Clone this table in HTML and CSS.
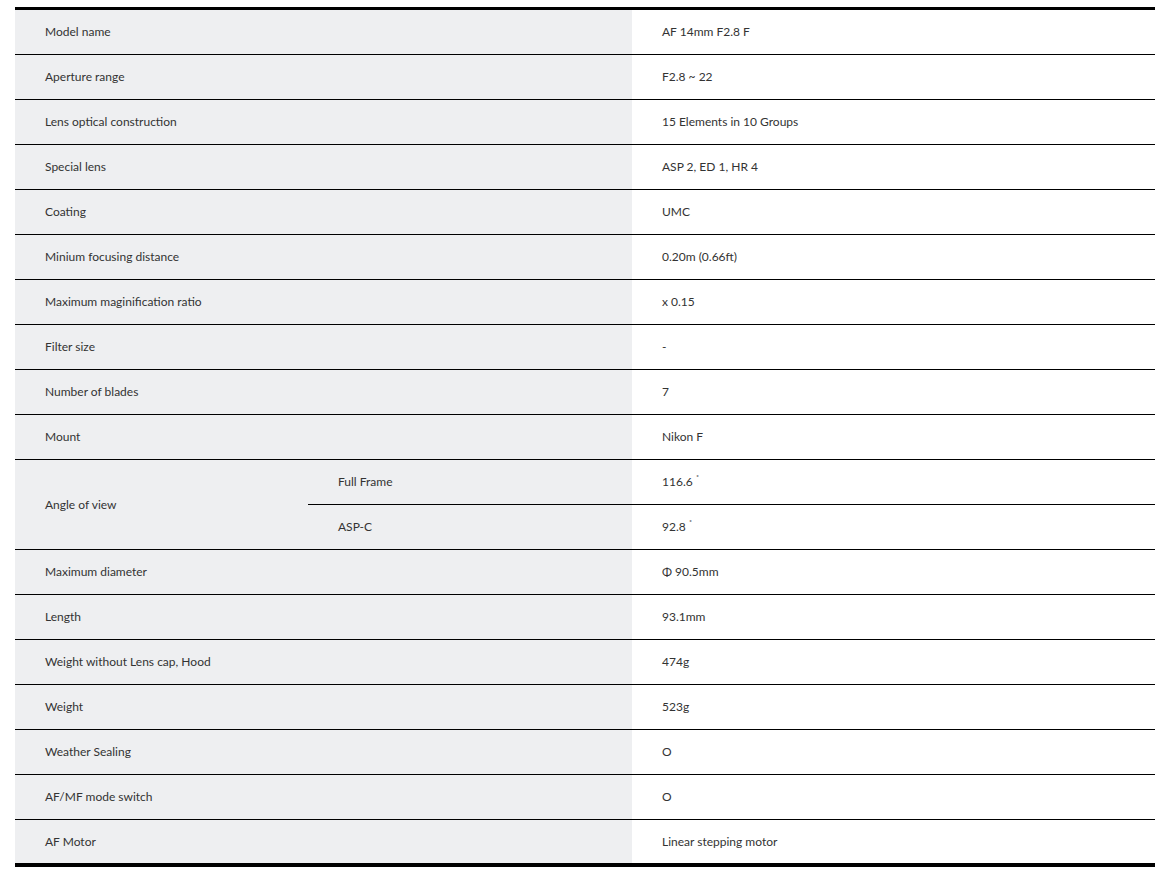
FILE: index.html
```html
<!DOCTYPE html>
<html lang="en">
<head>
<meta charset="utf-8">
<title>Specifications</title>
<link rel="stylesheet" href="styles.css">
</head>
<body>
<table class="spec">
  <colgroup>
    <col class="c-label">
    <col class="c-sub">
    <col class="c-value">
  </colgroup>
  <tbody>
    <tr><th colspan="2">Model name</th><td>AF 14mm F2.8 F</td></tr>
    <tr><th colspan="2">Aperture range</th><td>F2.8 ~ 22</td></tr>
    <tr><th colspan="2">Lens optical construction</th><td>15 Elements in 10 Groups</td></tr>
    <tr><th colspan="2">Special lens</th><td>ASP 2, ED 1, HR 4</td></tr>
    <tr><th colspan="2">Coating</th><td>UMC</td></tr>
    <tr><th colspan="2">Minium focusing distance</th><td>0.20m (0.66ft)</td></tr>
    <tr><th colspan="2">Maximum maginification ratio</th><td>x 0.15</td></tr>
    <tr><th colspan="2">Filter size</th><td>-</td></tr>
    <tr><th colspan="2">Number of blades</th><td>7</td></tr>
    <tr><th colspan="2">Mount</th><td>Nikon F</td></tr>
    <tr><th rowspan="2">Angle of view</th><th class="sub">Full Frame</th><td>116.6 <sup class="deg">˚</sup></td></tr>
    <tr><th class="sub">ASP-C</th><td>92.8 <sup class="deg">˚</sup></td></tr>
    <tr><th colspan="2">Maximum diameter</th><td>Φ 90.5mm</td></tr>
    <tr><th colspan="2">Length</th><td>93.1mm</td></tr>
    <tr><th colspan="2">Weight without Lens cap, Hood</th><td>474g</td></tr>
    <tr><th colspan="2">Weight</th><td>523g</td></tr>
    <tr><th colspan="2">Weather Sealing</th><td>O</td></tr>
    <tr><th colspan="2">AF/MF mode switch</th><td>O</td></tr>
    <tr class="last"><th colspan="2">AF Motor</th><td>Linear stepping motor</td></tr>
  </tbody>
</table>
</body>
</html>
```
FILE: styles.css
```css
html, body {
  margin: 0;
  padding: 0;
  background: #ffffff;
}
body {
  padding: 7px 21px 0 15px;
  font-family: Lato, "Open Sans", sans-serif;
  font-size: 12px;
  color: #333333;
}
.spec {
  width: 1140px;
  table-layout: fixed;
  border-collapse: separate;
  border-spacing: 0;
  border-top: 3px solid #000;
  border-bottom: 4px solid #000;
}
.c-label { width: 293px; }
.c-sub { width: 324px; }
.c-value { width: 523px; }
.spec th, .spec td {
  height: 45px;
  padding: 0 0 0 30px;
  border-bottom: 1px solid #000;
  text-align: left;
  vertical-align: middle;
  font-weight: 400;
  line-height: 16px;
  box-sizing: border-box;
}
.spec th {
  background: #eeeff1;
}
.spec td {
  background: #fff;
}
.spec tr.last th, .spec tr.last td {
  border-bottom: none;
  height: 43px;
}
.deg {
  font-size: 9px;
  vertical-align: 4px;
  line-height: 0;
}
```
